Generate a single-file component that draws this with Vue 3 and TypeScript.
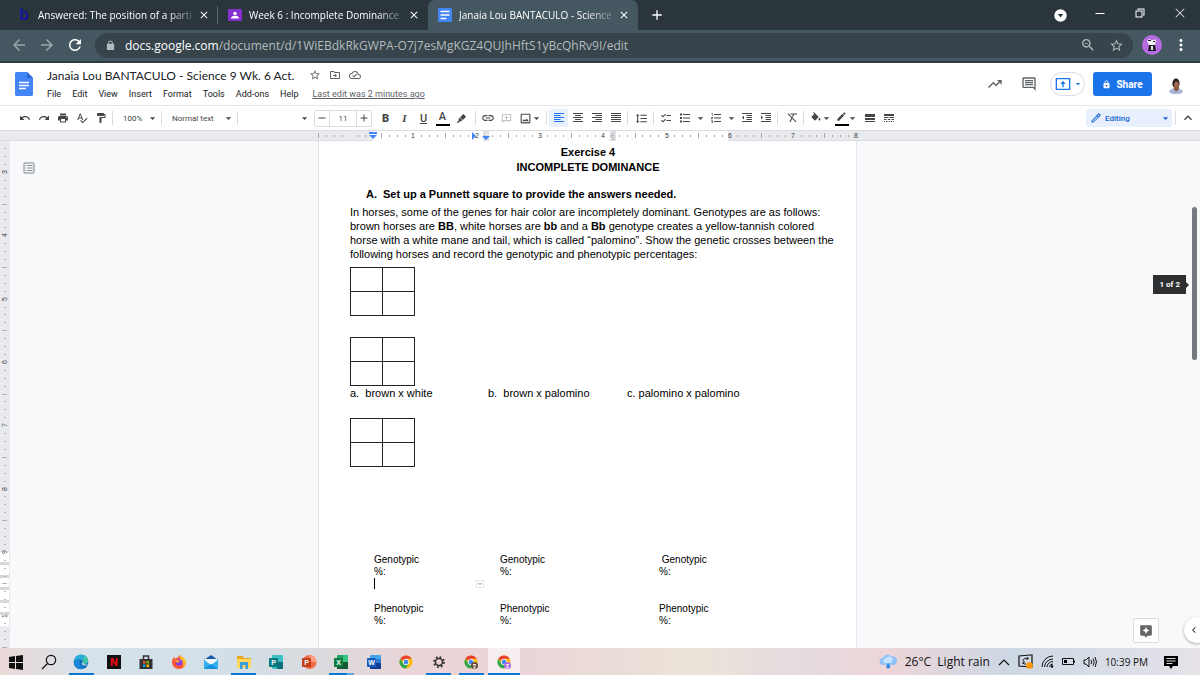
<script setup lang="ts">
import { h, ref } from 'vue'

const paths: Record<string, string> = {
  back: 'M20 11H7.83l5.59-5.59L12 4l-8 8 8 8 1.41-1.41L7.83 13H20v-2z',
  forward: 'M4 13h12.17l-5.59 5.59L12 20l8-8-8-8-1.41 1.41L16.17 11H4v2z',
  reload: 'M17.65 6.35C16.2 4.9 14.21 4 12 4c-4.42 0-7.99 3.58-7.99 8s3.57 8 7.99 8c3.73 0 6.84-2.55 7.73-6h-2.08c-.82 2.33-3.04 4-5.65 4-3.31 0-6-2.69-6-6s2.69-6 6-6c1.66 0 3.14.69 4.22 1.78L13 11h7V4l-2.35 2.35z',
  lock: 'M18 8h-1V6c0-2.76-2.24-5-5-5S7 3.24 7 6v2H6c-1.1 0-2 .9-2 2v10c0 1.1.9 2 2 2h12c1.1 0 2-.9 2-2V10c0-1.1-.9-2-2-2zM9 6c0-1.66 1.34-3 3-3s3 1.34 3 3v2H9V6z',
  shareLock: 'M18 8h-1V6c0-2.76-2.24-5-5-5S7 3.24 7 6v2H6c-1.1 0-2 .9-2 2v10c0 1.1.9 2 2 2h12c1.1 0 2-.9 2-2V10c0-1.1-.9-2-2-2zM9 6c0-1.66 1.34-3 3-3s3 1.34 3 3v2H9V6zM12 12.500a2.500 2.500 0 1 0 .01 0z',
  zoomOut: 'M15.5 14h-.79l-.28-.27C15.41 12.59 16 11.11 16 9.5 16 5.91 13.09 3 9.5 3S3 5.91 3 9.5 5.91 16 9.5 16c1.61 0 3.09-.59 4.23-1.57l.27.28v.79l5 4.99L20.49 19l-4.99-5zm-6 0C7.01 14 5 11.99 5 9.5S7.01 5 9.5 5 14 7.01 14 9.5 11.99 14 9.5 14zM7 9h5v1H7z',
  star: 'M22 9.24l-7.19-.62L12 2 9.19 8.63 2 9.24l5.46 4.73L5.82 21 12 17.27 18.18 21l-1.63-7.03L22 9.24zM12 15.4l-3.76 2.27 1-4.28-3.32-2.88 4.38-.38L12 6.1l1.71 4.04 4.38.38-3.32 2.88 1 4.28L12 15.4z',
  dots: 'M12 8c1.100 0 2-.9 2-2s-.9-2-2-2-2 .9-2 2 .9 2 2 2zm0 2c-1.100 0-2 .9-2 2s.9 2 2 2 2-.9 2-2-.9-2-2-2zm0 6c-1.100 0-2 .9-2 2s.9 2 2 2 2-.9 2-2-.9-2-2-2z',
  cross: 'M19 6.400L17.600 5 12 10.600 6.400 5 5 6.400 10.600 12 5 17.600 6.400 19 12 13.400 17.600 19 19 17.600 13.400 12z',
  thinCross: 'M21 4L20 3 12 11 4 3 3 4 11 12 3 20 4 21 12 13 20 21 21 20 13 12z',
  plus: 'M19 13h-6v6h-2v-6H5v-2h6V5h2v6h6z',
  minus: 'M5 11h14v2H5z',
  minimise: 'M3 12h18v2H3z',
  restore: 'M3 7h14v14H3zM5 9v10h10V9zM7 3h14v14h-3v-2h1V5H9v1H7z',
  folder: 'M20 6h-8l-2-2H4c-1.100 0-2 .9-2 2v12c0 1.100.9 2 2 2h16c1.100 0 2-.9 2-2V8c0-1.100-.9-2-2-2zm0 12H4V6h5.170l2 2H20v10zM12 17l4-4-4-4v3H8v2h4z',
  cloud: 'M19.35 10.04C18.67 6.59 15.64 4 12 4 9.11 4 6.6 5.64 5.35 8.04 2.34 8.36 0 10.91 0 14c0 3.31 2.69 6 6 6h13c2.76 0 5-2.24 5-5 0-2.64-2.05-4.78-4.65-4.96zM19 18H6c-2.21 0-4-1.79-4-4 0-2.05 1.53-3.76 3.56-3.97l1.07-.11.5-.95C8.08 7.14 9.94 6 12 6c2.62 0 4.88 1.86 5.39 4.43l.3 1.5 1.53.11c1.56.1 2.78 1.41 2.78 2.96 0 1.65-1.35 3-3 3zm-9-3.82l-2.09-2.09L6.5 13.5 10 17l6.01-6.01-1.41-1.41z',
  trend: 'M15 6l2.600 2.600-4.200 4.200-4-4L1.500 16.600 3 18.100l6.400-6.400 4 4 5.700-5.700L22 13V6z',
  comment: 'M21.99 4c0-1.1-.89-2-1.99-2H4c-1.1 0-2 .9-2 2v12c0 1.1.9 2 2 2h14l4 4-.01-18zM20 4v13.17L18.83 16H4V4h16zM6 12h12v2H6v-2zm0-3h12v2H6V9zm0-3h12v2H6V6z',
  present: 'M1 3h22v18H1zM3 5v14h18V5zM11 17v-5H8l4-5 4 5h-3v5z',
  undo: 'M12.5 8c-2.65 0-5.05.99-6.9 2.6L2 7v9h9l-3.62-3.62c1.39-1.16 3.16-1.88 5.12-1.88 3.54 0 6.55 2.31 7.6 5.5l2.37-.78C21.08 11.03 17.15 8 12.5 8z',
  redo: 'M18.4 10.6C16.55 8.99 14.15 8 11.5 8c-4.65 0-8.58 3.03-9.96 7.22L3.9 16c1.05-3.19 4.05-5.5 7.6-5.5 1.95 0 3.73.72 5.12 1.88L13 16h9V7l-3.6 3.6z',
  print: 'M19 8H5c-1.66 0-3 1.34-3 3v6h4v4h12v-4h4v-6c0-1.66-1.34-3-3-3zm-3 11H8v-5h8v5zm3-7c-.55 0-1-.45-1-1s.45-1 1-1 1 .45 1 1-.45 1-1 1zm-1-9H6v4h12V3z',
  spell: 'M12.45 16h2.09L9.43 3H7.57L2.46 16h2.09l1.12-3h5.64l1.14 3zm-6.02-5L8.5 5.48 10.57 11H6.43zm15.16.59l-8.09 8.09L9.83 16l-1.41 1.41 5.09 5.09L23 13l-1.41-1.41z',
  paint: 'M18 4V3c0-.55-.45-1-1-1H5c-.55 0-1 .45-1 1v4c0 .55.45 1 1 1h12c.55 0 1-.45 1-1V6h1v4H9v11c0 .55.45 1 1 1h2c.55 0 1-.45 1-1v-9h8V4h-3z',
  marker: 'M16 2l6 6-7 7-6-6zM8 10l6 6-3 2-2 0-5 4H1l5-6v-3z',
  link: 'M3.9 12c0-1.71 1.39-3.1 3.1-3.1h4V7H7c-2.76 0-5 2.24-5 5s2.24 5 5 5h4v-1.9H7c-1.71 0-3.1-1.39-3.1-3.1zM8 13h8v-2H8v2zm9-6h-4v1.9h4c1.71 0 3.1 1.39 3.1 3.1s-1.39 3.1-3.1 3.1h-4V17h4c2.76 0 5-2.24 5-5s-2.24-5-5-5z',
  addComment: 'M20 2H4c-1.100 0-2 .9-2 2v18l4-4h14c1.100 0 2-.9 2-2V4c0-1.100-.9-2-2-2zM4 4h16v12H4zM11 6h2v3h3v2h-3v3h-2v-3H8V9h3z',
  image: 'M19 5v14H5V5h14m0-2H5c-1.1 0-2 .9-2 2v14c0 1.1.9 2 2 2h14c1.1 0 2-.9 2-2V5c0-1.1-.9-2-2-2zm-4.860 8.860l-3 3.870L9 13.140 6 17h12l-3.860-5.140z',
  left: 'M2 2h20v2H2zM2 6h13v2H2zM2 10h20v2H2zM2 14h13v2H2zM2 18h20v2H2z',
  center: 'M2 2h20v2H2zM6 6h12v2H6zM2 10h20v2H2zM6 14h12v2H6zM2 18h20v2H2z',
  right: 'M2 2h20v2H2zM9 6h13v2H9zM2 10h20v2H2zM9 14h13v2H9zM2 18h20v2H2z',
  justify: 'M2 2h20v2H2zM2 6h20v2H2zM2 10h20v2H2zM2 14h20v2H2zM2 18h20v2H2z',
  spacing: 'M6 7h2.5L5 3.5 1.5 7H4v10H1.5L5 20.5 8.5 17H6V7zm4-2v2h12V5H10zm0 14h12v-2H10v2zm0-6h12v-2H10v2z',
  checklist: 'M13 6h9v2h-9zM13 16h9v2h-9zM2 7l1.400-1.400L6 8.200 10.600 3.600 12 5 6 11zM2 17l1.400-1.400L6 18.200l4.600-4.600L12 15l-6 6z',
  bullets: 'M2 3h4v4H2zM2 10h4v4H2zM2 17h4v4H2zM8 4h14v2H8zM8 11h14v2H8zM8 18h14v2H8z',
  numbers: 'M3 2h2v6H4V4H3zM2 10h4v1l-2 2.500h2v1H2v-1l2-2.500H2zM2 17h4v5H2v-1h3v-1H3v-1h2v-1H2zM8 4h14v2H8zM8 11h14v2H8zM8 18h14v2H8z',
  outdent: 'M11 16h11v-2H11v2zm-9-5l4 4V7l-4 4zm0 9h20v-2H2v2zM2 2v2h20V2H2zm9 6h11V6H11v2zm0 4h11v-2H11v2z',
  indent: 'M2 20h20v-2H2v2zM2 7v8l4-4-4-4zm9 9h11v-2H11v2zM2 2v2h20V2H2zm9 6h11V6H11v2zm0 4h11v-2H11v2z',
  clear: 'M3 4l1.500-1.500L21 19l-1.500 1.500-7-7L9 20H6.500l4.400-8.100zM8 3h14v2h-5.500l-3 5.500L12 9l2.200-4H10z',
  fill: 'M16.56 8.94L7.62 0 6.21 1.41l2.38 2.38-5.15 5.15c-.59.59-.59 1.54 0 2.12l5.5 5.5c.29.29.68.44 1.06.44s.77-.15 1.06-.44l5.5-5.5c.59-.58.59-1.53 0-2.12zM19 11.5s-2 2.17-2 3.5c0 1.1.9 2 2 2s2-.9 2-2c0-1.33-2-3.5-2-3.5z',
  edit: 'M3 17.25V21h3.75L17.81 9.94l-3.75-3.75L3 17.25zM20.71 7.04c.39-.39.39-1.02 0-1.41l-2.34-2.34c-.39-.39-1.02-.39-1.41 0l-1.83 1.83 3.75 3.75 1.83-1.83z',
  editOutline: 'M3 17.250V21h3.750L21 7.300c.5-.6.5-1.300 0-1.800L18.500 3c-.5-.5-1.300-.5-1.800 0zM5 18.100L14 9l1.500 1.500L6.400 19H5zM15.500 7.500L17.600 5.300l1.400 1.500-2.100 2.100z',
  weight: 'M2 4h20v6H2zM2 12h20v4H2zM2 18h20v2H2z',
  dash: 'M2 4h20v4H2zM2 10h9v2H2zM13 10h9v2h-9zM2 14h5v2H2zM9.500 14h5v2h-5zM17 14h5v2h-5zM2 18h2v2H2zM6 18h3v2H6zM11 18h2v2h-2zM15 18h3v2h-3zM20 18h2v2h-2z',
  up: 'M12 8l-6 6 1.410 1.410L12 10.830l4.590 4.580L18 14z',
  chevronLeft: 'M15.410 7.410L14 6l-6 6 6 6 1.410-1.410L10.830 12z',
  caret: 'M3 8h18l-9 9z',
  outline: 'M4 1h16c1.700 0 3 1.300 3 3v16c0 1.700-1.300 3-3 3H4c-1.700 0-3-1.300-3-3V4c0-1.700 1.300-3 3-3zM3 3v18h18V3zM5 6h2v2H5zM9 6h10v2H9zM5 11h2v2H5zM9 11h10v2H9zM5 16h2v2H5zM9 16h10v2H9z',
  explore: 'M4 2h16c1.100 0 2 .9 2 2v14c0 1.100-.9 2-2 2h-5l-3 3-3-3H4c-1.100 0-2-.9-2-2V4c0-1.100.9-2 2-2zM12 5l-1.900 4.100L6 11l4.100 1.900L12 17l1.900-4.100L18 11l-4.100-1.900z',
}

const Icon = (props: { name: string }) =>
  h('svg', { viewBox: '0 0 24 24', fill: 'currentColor', 'aria-hidden': 'true' }, [
    h('path', { d: paths[props.name], 'fill-rule': 'evenodd' }),
  ])
Icon.props = ['name']

const menus = ['File', 'Edit', 'View', 'Insert', 'Format', 'Tools', 'Add-ons', 'Help']
const fontSize = ref('11')
const url = { host: 'docs.google.com', rest: '/document/d/1WiEBdkRkGWPA-O7j7esMgKGZ4QUJhHftS1yBcQhRv9I/edit' }

const inch = 63.3
const hTicks = Array.from({ length: 69 }, (_, i) => i)
  .filter((i) => i % 8 !== 4 || i === 0)
  .map((i) => ({ x: Math.round((i * inch) / 8) + 0.5, tall: i % 8 === 0 }))
const hNumbers = [1, 2, 3, 4, 5, 6, 7, 8].map((n) => ({ n, x: Math.round(32 + n * inch) }))
const vNumbers = [3, 4, 5, 6, 7, 8, 9].map((n) => ({ n: String(n), y: Math.round(31 + (n - 3) * inch) }))
vNumbers.push({ n: '1', y: 475 })
const vTicks = Array.from({ length: 66 }, (_, i) => i - 3)
  .filter((i) => i % 8 !== 0)
  .map((i) => ({ y: Math.round(31 + (i * inch) / 8) + 0.5, tall: Math.abs(i % 8) === 4 }))
  .filter((t) => t.y > 4)
const vCells = [422, 435, 447, 460, 472]

const genotypes = ['Genotypic', 'Genotypic', 'Genotypic']
const phenotypes = ['Phenotypic', 'Phenotypic', 'Phenotypic']
</script>

<template>
  <div class="screen">
    <div class="tabs" role="tablist">
      <div class="tab first">
        <svg class="fav" viewBox="0 0 14 14"><text x="2" y="12" class="bfav">b</text></svg>
        <button class="tabname" role="tab">Answered: The position of a parti</button>
        <button class="x" aria-label="Close tab"><Icon name="cross" class="i12" /></button>
      </div>
      <div class="tab">
        <svg class="fav" viewBox="0 0 14 14"><rect y="1" width="14" height="12" rx="1" fill="#8430ce" /><circle cx="7" cy="5.500" r="1.800" fill="#fff" /><path d="M3 10.500c0-2 2-2.700 4-2.700s4 .7 4 2.700z" fill="#fff" /></svg>
        <button class="tabname" role="tab">Week 6 : Incomplete Dominance</button>
        <button class="x" aria-label="Close tab"><Icon name="cross" class="i12" /></button>
      </div>
      <div class="tab active">
        <svg class="fav" viewBox="0 0 14 14"><rect width="14" height="14" rx="1" fill="#4285f4" /><path d="M2.500 3.500h9M2.500 7h9M2.500 10.500h6" stroke="#fff" stroke-width="1.500" /></svg>
        <button class="tabname" role="tab">Janaia Lou BANTACULO - Science</button>
        <button class="x" aria-label="Close tab"><Icon name="cross" class="i12" /></button>
      </div>
      <button class="newtab" aria-label="New tab"><Icon name="plus" class="i16" /></button>
      <div class="winbtns">
        <button aria-label="Search tabs"><svg class="i13" viewBox="0 0 13 13"><circle cx="6.500" cy="6.500" r="6.200" fill="#fff" /><path d="M3.800 5h5.400L6.500 8.500z" fill="#29343a" /></svg></button>
        <button aria-label="Minimise"><Icon name="minimise" class="i12" /></button>
        <button aria-label="Restore"><Icon name="restore" class="i12" /></button>
        <button aria-label="Close"><Icon name="thinCross" class="i12" /></button>
      </div>
    </div>

    <div class="address">
      <button class="dim" aria-label="Back"><Icon name="back" class="i18" /></button>
      <button class="dim" aria-label="Forward"><Icon name="forward" class="i18" /></button>
      <button aria-label="Reload"><Icon name="reload" class="i18" /></button>
      <div class="omni">
        <Icon name="lock" class="i11" />
        <a class="url" href="#">{{ url.host }}<span>{{ url.rest }}</span></a>
        <button aria-label="Zoom"><Icon name="zoomOut" class="i16" /></button>
        <button aria-label="Bookmark"><Icon name="star" class="i15" /></button>
      </div>
      <button class="profile" aria-label="Profile">
        <svg class="i20" viewBox="0 0 20 20"><circle cx="10" cy="10" r="10" fill="#b86ae0" /><path d="M5 6l2-2 2 1h3l1-1 1 2-1 4H7z" fill="#f2f2f2" /><path d="M6 5h3v1H6zM11 6l2 0 0 1-2 0zM7 10h6l1 6H6z" fill="#1b1b22" /><path d="M9 11h2v4H9z" fill="#e8e8e8" /></svg>
      </button>
      <button class="more" aria-label="Menu"><Icon name="dots" class="i18" /></button>
    </div>

    <header class="dochead">
      <svg class="doclogo" viewBox="0 0 18 24"><path d="M1.500 0H12l6 6v16.500c0 .8-.7 1.500-1.500 1.500h-15C.7 24 0 23.300 0 22.500v-21C0 .7.7 0 1.500 0z" fill="#4285f4" /><path d="M12 0l6 6h-6z" fill="#2a66d8" /><path d="M4 10.500h10M4 13.500h10M4 16.500h7" stroke="#fff" stroke-width="1.500" /></svg>
      <div class="titles">
        <div class="titlerow">
          <h1>Janaia Lou BANTACULO - Science 9 Wk. 6 Act.</h1>
          <button aria-label="Star"><Icon name="star" class="i12" /></button>
          <button aria-label="Move"><Icon name="folder" class="i12" /></button>
          <button aria-label="Saved"><Icon name="cloud" class="i12" /></button>
        </div>
        <nav class="menus">
          <button v-for="m in menus" :key="m">{{ m }}</button>
          <a href="#">Last edit was 2 minutes ago</a>
        </nav>
      </div>
      <div class="actions">
        <button aria-label="Activity"><Icon name="trend" class="i16" /></button>
        <button aria-label="Comments"><Icon name="comment" class="i16" /></button>
        <button class="present" aria-label="Present"><Icon name="present" class="i16" /><Icon name="caret" class="i6" /></button>
        <button class="share"><Icon name="shareLock" class="i9" />Share</button>
        <svg class="avatar" viewBox="0 0 14 16"><path d="M0 14c1-3 3-3 5-4h4c2 1 4 1 5 4-2 2-4 2-7 2s-5 0-7-2z" fill="#a9b4d6" /><ellipse cx="7" cy="5.500" rx="3.600" ry="5" fill="#2c201d" /><ellipse cx="7.500" cy="7" rx="2.400" ry="3.600" fill="#a2694e" /><path d="M5 11l2 3 3-3 0-2H5z" fill="#8d573f" /></svg>
      </div>
    </header>

    <div class="toolbar">
      <div class="grp">
        <button v-for="n in ['undo', 'redo', 'print', 'spell', 'paint']" :key="n" class="t" :aria-label="n"><Icon :name="n" class="i12" /></button>
      </div>
      <i class="sep"></i>
      <label class="pick zoom"><select aria-label="Zoom level"><option>100%</option></select><Icon name="caret" class="i7" /></label>
      <i class="sep"></i>
      <label class="pick"><select aria-label="Paragraph style"><option>Normal text</option></select><Icon name="caret" class="i7" /></label>
      <i class="sep"></i>
      <label class="pick"><select aria-label="Font"><option></option></select><Icon name="caret" class="i7" /></label>
      <div class="size">
        <button aria-label="Smaller"><Icon name="minus" class="i12" /></button>
        <input v-model="fontSize" aria-label="Font size" />
        <button aria-label="Larger"><Icon name="plus" class="i12" /></button>
      </div>
      <div class="grp">
        <button class="t ch"><b>B</b></button>
        <button class="t ch"><em>I</em></button>
        <button class="t ch"><u>U</u></button>
        <button class="t ch"><span class="ink">A</span></button>
        <button class="t" aria-label="Highlight"><Icon name="marker" class="i11" /></button>
      </div>
      <i class="sep wide"></i>
      <div class="grp">
        <button class="t" aria-label="Link"><Icon name="link" class="i14" /></button>
        <button class="t faint" aria-label="Add comment"><Icon name="addComment" class="i11" /></button>
        <button class="t" aria-label="Image"><Icon name="image" class="i13" /></button>
        <Icon name="caret" class="i7 tight" />
      </div>
      <i class="sep wide"></i>
      <div class="grp">
        <button class="t on" aria-label="Left"><Icon name="left" class="i12" /></button>
        <button class="t" aria-label="Center"><Icon name="center" class="i12" /></button>
        <button class="t" aria-label="Right"><Icon name="right" class="i12" /></button>
        <button class="t" aria-label="Justify"><Icon name="justify" class="i12" /></button>
      </div>
      <i class="sep"></i>
      <div class="grp pad"><button class="t" aria-label="Line spacing"><Icon name="spacing" class="i13" /></button></div>
      <i class="sep"></i>
      <div class="grp lists">
        <button class="t" aria-label="Checklist"><Icon name="checklist" class="i12" /></button>
        <button class="t" aria-label="Bullets"><Icon name="bullets" class="i12" /></button>
        <Icon name="caret" class="i7" />
        <button class="t" aria-label="Numbers"><Icon name="numbers" class="i12" /></button>
        <Icon name="caret" class="i7" />
      </div>
      <div class="grp">
        <button class="t" aria-label="Outdent"><Icon name="outdent" class="i12" /></button>
        <button class="t" aria-label="Indent"><Icon name="indent" class="i12" /></button>
      </div>
      <i class="sep"></i>
      <div class="grp pad"><button class="t" aria-label="Clear formatting"><Icon name="clear" class="i12" /></button></div>
      <i class="sep"></i>
      <div class="grp">
        <button class="t" aria-label="Fill"><Icon name="fill" class="i12" /></button>
        <Icon name="caret" class="i7 tight" />
        <button class="t" aria-label="Border colour"><span class="ink"><Icon name="edit" class="i11" /></span></button>
        <Icon name="caret" class="i7 tight" />
      </div>
      <div class="grp pad">
        <button class="t" aria-label="Border weight"><Icon name="weight" class="i12" /></button>
        <button class="t" aria-label="Border dash"><Icon name="dash" class="i12" /></button>
      </div>
      <label class="pick mode"><Icon name="editOutline" class="i12" /><select aria-label="Mode"><option>Editing</option></select><Icon name="caret" class="i7" /></label>
      <i class="sep edge"></i>
      <button class="t" aria-label="Hide menus"><Icon name="up" class="i16" /></button>
    </div>

    <div class="cols hruler">
      <svg class="mid" viewBox="0 0 546 10" width="546" height="10">
        <rect x="55" width="355" height="10" fill="#fff" />
        <rect x="165" width="6" height="10" fill="#dfe1e4" /><rect x="292" width="6" height="10" fill="#dfe1e4" />
        <path d="M295 2v7" stroke="#80868b" stroke-dasharray="1 1" />
        <path v-for="t in hTicks" :key="t.x" :d="`M${t.x} ${t.tall ? 2 : 4}v${t.tall ? 5 : 2}`" stroke="#a5a9ae" />
        <text v-for="t in hNumbers" :key="t.n" :x="t.x" y="7" class="num">{{ t.n }}</text>
        <path d="M51 1h8v3l-4 4-4-4zM154 1l4 4-4 4zM164 5h8l-4 4z" fill="#4285f4" /><path d="M51 3.500h8" stroke="#fff" />
      </svg>
    </div>

    <main class="cols work">
      <svg class="vruler" viewBox="0 0 10 507" width="10" height="507">
        <rect y="411" width="9" height="74" fill="#fff" />
        <path v-for="y in vCells" :key="y" :d="`M0 ${y}.5h9`" stroke="#d5d7da" stroke-width="3" />
        <path v-for="t in vTicks" :key="t.y" :d="`M${t.tall ? 2 : 4} ${t.y}h${t.tall ? 5 : 2}`" stroke="#b0b4b8" />
        <text v-for="t in vNumbers" :key="t.n" :transform="`translate(7 ${t.y}) rotate(-90)`" class="num">{{ t.n }}</text>
      </svg>
      <div class="leftside"><button aria-label="Show outline"><Icon name="outline" class="i12" /></button></div>

      <article class="page">
        <h2>Exercise 4<br />INCOMPLETE DOMINANCE</h2>
        <h3><span>A.</span>Set up a Punnett square to provide the answers needed.</h3>
        <p class="intro">
          In horses, some of the genes for hair color are incompletely dominant. Genotypes are as follows:<br />
          brown horses are <b>BB</b>, white horses are <b>bb</b> and a <b>Bb</b> genotype creates a yellow-tannish colored<br />
          horse with a white mane and tail, which is called “palomino”. Show the genetic crosses between the<br />
          following horses and record the genotypic and phenotypic percentages:
        </p>
        <table class="punnett"><tbody><tr><td></td><td></td></tr><tr><td></td><td></td></tr></tbody></table>
        <table class="punnett second"><tbody><tr><td></td><td></td></tr><tr><td></td><td></td></tr></tbody></table>
        <div class="crosses"><span>a.&nbsp; brown x white</span><span>b.&nbsp; brown x palomino</span><span>c. palomino x palomino</span></div>
        <table class="punnett third"><tbody><tr><td></td><td></td></tr><tr><td></td><td></td></tr></tbody></table>
        <div class="results">
          <div v-for="(g, i) in genotypes" :key="i"><span v-if="i === 2">&nbsp;</span>{{ g }}<br />%:<div v-if="i === 0" class="caretrow"><i class="cursor"></i><button aria-label="Cell options"><Icon name="caret" class="i6" /></button></div></div>
        </div>
        <div class="results pheno">
          <div v-for="(p, i) in phenotypes" :key="i">{{ p }}<br />%:</div>
        </div>
      </article>

      <div class="rightside">
        <div class="pageno">1 of 2</div>
        <div class="thumb"></div>
        <button class="explore" aria-label="Explore"><Icon name="explore" class="i14" /></button>
        <button class="panel" aria-label="Show side panel"><Icon name="chevronLeft" class="i12" /></button>
      </div>
    </main>

    <footer class="taskbar">
      <div class="apps">
        <button aria-label="Start"><svg viewBox="0 0 16 16"><path d="M1 3l6-1v6H1zM8 2l7-1v7H8zM1 9h6v6l-6-1zM8 9h7v7l-7-1z" fill="#111" /></svg></button>
        <button aria-label="Search"><svg viewBox="0 0 16 16"><circle cx="10" cy="6" r="4.700" fill="none" stroke="#111" stroke-width="1.200" /><path d="M6.500 9.500L1 15" stroke="#111" stroke-width="1.200" /></svg></button>
        <button class="run" aria-label="Edge"><svg viewBox="0 0 16 16"><circle cx="8" cy="8" r="7.300" fill="#0f6cbd" /><path d="M1 7C2 2.500 5 .7 8.500.7c4 0 6.800 3 6.800 5.800 0 2.500-2 3.500-4 3.500-1.500 0-2-.7-1.300-1.500C10.500 6 7 3.500 1 7z" fill="#43c6a4" /><path d="M1 7C2 2.500 5 .7 8.500.7c1.500 0 3 .5 4 1.300-2 1-2.500 2.500-2.500 4.500C8 3.500 4 4.500 1 7z" fill="#2aa9dc" /><path d="M1 8c1-2.500 5-3.500 6-1-1 2 0 6 3.500 6.500-1.500 1.500-4 2-6 1C2 13 1 10.500 1 8z" fill="#1b86d8" /><path d="M9.500 8c-1.500 1.500 0 4 3.500 3.500l2-1c-1 0-5 1-5.500-2.500z" fill="#e3edf3" /></svg></button>
        <button aria-label="Netflix"><svg viewBox="0 0 16 16"><rect x="1" y="1" width="14" height="14" fill="#111" /><text x="8" y="12" class="nfx">N</text></svg></button>
        <button aria-label="Store"><svg viewBox="0 0 16 16"><path d="M1.500 5h13v10h-13z" fill="#333" /><path d="M5.500 5V2h5v3" fill="none" stroke="#333" stroke-width="1.500" /><path d="M5 7h2.500v2.500H5z" fill="#f25022" /><path d="M8.500 7H11v2.500H8.500z" fill="#7fba00" /><path d="M5 10.500h2.500V13H5z" fill="#00a4ef" /><path d="M8.500 10.500H11V13H8.500z" fill="#ffb900" /></svg></button>
        <button aria-label="Firefox"><svg viewBox="0 0 16 16"><path d="M1 8c0-2 1-4 2-5l1 1.500C6 4 8 3 9 1c1 2 5 3 6 7 0 4-3 7-7 7s-7-3-7-7z" fill="#ff5a36" /><path d="M9 1c1 2 6 3 6 7 0 3-2 5-3 5 1-3 0-6-3-8z" fill="#ffbd2e" /><circle cx="8" cy="8.500" r="3.300" fill="#8a3fe0" /><path d="M4 6c3-1 4 1 5 1-1 2-3 1-3 2 0-1-2-1-2-3z" fill="#ff9a2e" /></svg></button>
        <button aria-label="Mail"><svg viewBox="0 0 16 16"><path d="M1 6l7-5 7 5z" fill="#0f5ba6" /><path d="M1 6h14v9H1z" fill="#28a8ea" /><path d="M2 5h12v3l-6 3-6-3z" fill="#f0f6fb" /><path d="M1 6l7 5 7-5v9H1z" fill="#33b1f0" /><path d="M1 15l7-5 7 5z" fill="#1490df" /></svg></button>
        <button class="run" aria-label="Files"><svg viewBox="0 0 16 16"><path d="M1 2h6l1 2h7v10H1z" fill="#e8a820" /><path d="M1 5h14v9H1z" fill="#ffd65c" /><path d="M4 8h8v7h-2.500v-4h-3v4H4z" fill="#3f9be0" /></svg></button>
        <button aria-label="Publisher"><svg viewBox="0 0 16 16"><rect x="4" y="1" width="11" height="14" rx="1" fill="#3cc0c4" /><path d="M9 8h6v7H9z" fill="#0a6f78" /><rect x="1" y="4" width="9" height="9" rx="1" fill="#077a80" /><text x="5.500" y="11" class="app">P</text></svg></button>
        <button aria-label="PowerPoint"><svg viewBox="0 0 16 16"><circle cx="8.500" cy="8" r="7" fill="#ed6c47" /><path d="M8.500 1a7 7 0 0 1 7 7h-7z" fill="#ff9f80" /><rect x="1" y="4" width="9" height="9" rx="1" fill="#c43e1c" /><text x="5.500" y="11" class="app">P</text></svg></button>
        <button class="run half" aria-label="Excel"><svg viewBox="0 0 16 16"><rect x="4" y="1" width="11" height="14" rx="1" fill="#21a366" /><path d="M10 1h5v7h-5z" fill="#33c481" /><path d="M4 8h11v7H4z" fill="#185c37" /><rect x="1" y="4" width="9" height="9" rx="1" fill="#107c41" /><text x="5.500" y="11" class="app">X</text></svg></button>
        <button aria-label="Word"><svg viewBox="0 0 16 16"><rect x="4" y="1" width="11" height="14" rx="1" fill="#41a5ee" /><path d="M4 5h11v4H4z" fill="#2b7cd3" /><path d="M4 9h11v6H4z" fill="#103f91" /><rect x="1" y="4" width="9" height="9" rx="1" fill="#185abd" /><text x="5.500" y="11" class="app">W</text></svg></button>
        <button aria-label="Chrome"><svg viewBox="0 0 16 16"><circle cx="8" cy="8" r="6.500" fill="#fbbc05" /><path d="M8 8L2.400 4.700A6.500 6.500 0 0 1 13.600 4.700H8z" fill="#ea4335" /><path d="M2.400 4.700A6.500 6.500 0 0 0 8 14.500L10.500 9.500 5 9z" fill="#34a853" /><circle cx="8" cy="8" r="3" fill="#fff" /><circle cx="8" cy="8" r="2.300" fill="#4285f4" /></svg></button>
        <button class="run" aria-label="Settings"><svg viewBox="0 0 16 16"><circle cx="8" cy="8" r="3.500" fill="none" stroke="#333" stroke-width="1.500" /><circle cx="8" cy="8" r="4.900" fill="none" stroke="#333" stroke-width="2" stroke-dasharray="1.800 2.048" /></svg></button>
        <button v-for="(c, k) in ['#6b4a35', '#b86ae0']" :key="c" class="run" :class="{ cur: k === 1 }" aria-label="Chrome profile"><svg viewBox="0 0 16 16"><circle cx="8" cy="8" r="6.500" fill="#fbbc05" /><path d="M8 8L2.400 4.700A6.500 6.500 0 0 1 13.600 4.700H8z" fill="#ea4335" /><path d="M2.400 4.700A6.500 6.500 0 0 0 8 14.500L10.500 9.500 5 9z" fill="#34a853" /><circle cx="8" cy="8" r="3" fill="#fff" /><circle cx="8" cy="8" r="2.300" fill="#4285f4" /><circle cx="11.500" cy="11.500" r="3.500" :fill="c" /><path d="M10 10h3v1.500h-3zM10.500 12.500h2v2h-2z" fill="#eee" /></svg></button>
      </div>
      <div class="tray">
        <svg class="i18" viewBox="0 0 18 18"><path d="M4 12a3.500 3.500 0 0 1 0-7 4.500 4.500 0 0 1 8-1.500 4 4 0 0 1 3 8.500z" fill="#8fc3f7" /><path d="M5 10a3 3 0 0 1 2-5 4 4 0 0 1 7 2l-2 3z" fill="#c8e3fc" /><path d="M9 10c2 2.500 2.500 3.500 2 4.500s-3 1.500-3.500 0S7.500 12.500 9 10z" fill="#2d86e8" /></svg>
        <span class="weather">26°C&nbsp; Light rain</span>
        <svg class="i12" viewBox="0 0 12 12"><path d="M1 9l5-5 5 5" fill="none" stroke="#111" stroke-width="1.200" /></svg>
        <svg class="i15" viewBox="0 0 15 15"><path d="M1 2l11-1 2 0v12l-13-1z" fill="none" stroke="#111" stroke-width="1.200" /><path d="M5 7a3 3 0 0 1 5-2V3M10 5H8M5 10V8h2M5 9a3 3 0 0 0 3 1" fill="none" stroke="#111" /><circle cx="11.500" cy="11.500" r="3.300" fill="#ff9800" /></svg>
        <svg class="i13" viewBox="0 0 13 13"><path d="M1 12A11 11 0 0 1 12 1M3.500 12A8.500 8.500 0 0 1 12 4M6 12a6 6 0 0 1 6-5.500M8.500 12A3.500 3.500 0 0 1 12 9" fill="none" stroke="#111" /><circle cx="11" cy="11.500" r="1.200" /></svg>
        <svg class="i13" viewBox="0 0 13 13"><path d="M.5 3.500h11v6H.5zM12.500 5.500v2" fill="none" stroke="#111" /><path d="M2 5h3v3H2z" /></svg>
        <svg class="i14" viewBox="0 0 14 14"><path d="M1 5h2l3-3v10L3 9H1zM8 5q1.500 2 0 4M10 3.500q2.500 3.500 0 7M12 2q3 5 0 10" fill="none" stroke="#111" /></svg>
        <time>10:39 PM</time>
        <svg class="i14" viewBox="0 0 14 14"><path d="M0 1h14v10H9l-2 3-2-3H0z" /><path d="M2.500 3.500h9M2.500 6h9M2.500 8.500h6" stroke="#ddd" /></svg>
      </div>
    </footer>
  </div>
</template>

<style>
html, body { margin: 0; background: #f8f9fa; }
</style>

<style scoped>
.screen { min-height: 100vh; display: flex; flex-direction: column; overflow: hidden; font-family: Roboto, "Liberation Sans", sans-serif; color: #3c4043; }
.screen *, .screen *::before, .screen *::after { box-sizing: border-box; }
button { border: 0; padding: 0; margin: 0; background: none; color: inherit; font: inherit; display: flex; align-items: center; justify-content: center; }
svg { display: block; flex: none; }
.i6 { width: 6px; height: 6px; } .i7 { width: 7px; height: 7px; } .i9 { width: 9px; height: 9px; }
.i11 { width: 11px; height: 11px; } .i12 { width: 12px; height: 12px; }
.i13 { width: 13px; height: 13px; } .i14 { width: 14px; height: 14px; } .i15 { width: 15px; height: 15px; }
.i16 { width: 16px; height: 16px; } .i18 { width: 18px; height: 18px; } .i20 { width: 20px; height: 20px; }

.tabs { display: flex; height: 30px; padding-left: 8px; background: #2a363c; color: #fff; font: 10px "Open Sans", sans-serif; }
.tab { width: 210px; display: flex; align-items: center; padding: 0 8px 0 10px; gap: 7px; }
.tab.first { padding-left: 9px; background: linear-gradient(#5b666c, #5b666c) right center / 1px 18px no-repeat; }
.tab.active { background: #455760; border-radius: 7px 7px 0 0; }
.fav { width: 14px; height: 14px; overflow: visible; }
.bfav { font: bold 16px "Open Sans", sans-serif; fill: #15188f; }
.tabname { flex: 1; min-width: 0; justify-content: flex-start; white-space: nowrap; mask-image: linear-gradient(90deg, #000 84%, #0004); }
.x { width: 12px; }
.newtab { width: 38px; }
.winbtns { margin-left: auto; display: flex; }
.winbtns button { width: 40px; height: 26px; }
.winbtns button:first-child { height: 30px; }

.address { display: flex; align-items: center; height: 33px; padding: 0 8px 1px 5px; background: #455760; border-bottom: 2px solid #2d3b43; color: #fff; }
.address > button { width: 28px; }
.address .dim { color: #9ba6ab; }
.omni { flex: 1; display: flex; align-items: center; height: 25px; border-radius: 13px; margin: 0 9px 0 6px; padding: 0 3px 0 10px; background: #37444b; color: #b3bbbf; }
.omni button { width: 28px; }
.url { flex: 1; margin-left: 9px; color: #fff; text-decoration: none; font: 12px "Open Sans", sans-serif; }
.url span { color: #b3bbbf; }
.address > .profile { width: 20px; margin-right: 7px; }
.address > .more { width: 23px; }

.dochead { display: flex; align-items: center; height: 43px; padding: 0 17px 0 15px; background: #fff; border-bottom: 1px solid #e3e5e8; }
.doclogo { width: 18px; height: 24px; }
.titles { margin-left: 14px; }
.titlerow { display: flex; align-items: center; gap: 8px; height: 18px; color: #5f6368; }
.titlerow h1 { margin: 0 7px 0 0; font: 12px Lato, sans-serif; color: #202124; white-space: nowrap; }
.menus { display: flex; align-items: center; gap: 11px; height: 18px; padding-top: 2px; font-size: 9px; color: #202124; }
.menus a { margin-left: 3px; color: #5f6368; }
.actions { margin-left: auto; display: flex; align-items: center; gap: 8px; color: #5f6368; }
.actions > button:nth-child(-n+2) { width: 26px; }
.actions .present { width: 35px; height: 24px; border: 1px solid #dadce0; border-radius: 12px; color: #1a73e8; gap: 4px; }
.actions .share { width: 59px; height: 24px; border-radius: 3px; background: #1a73e8; color: #fff; font-size: 10px; font-weight: 700; gap: 5px; }
.avatar { width: 14px; height: 16px; margin: 4px 0 0 9px; }

.toolbar { display: flex; align-items: center; height: 25px; padding: 0 3px 0 15px; background: #fff; border-bottom: 1px solid #dadce0; color: #444746; }
.grp { display: flex; align-items: center; }
.grp.pad { padding-left: 2px; }
.t { width: 19px; height: 18px; flex: none; }
.t.on { background: #e8f0fe; color: #1a73e8; }
.t.faint { color: #b6b8bb; }
.tight { margin: 0 2px 0 -2px; }
.lists > svg { margin: 0 2px 0 3px; }
.sep { width: 1px; height: 14px; flex: none; margin: 0 2px; background: #dadce0; }
.sep.wide { margin-left: 4px; }
.ch { font-size: 11px; font-weight: 500; }
.ch b { font-weight: 900; }
.ch em { font-family: "Liberation Serif", serif; font-weight: 700; }
.ink { display: block; width: 14px; height: 16px; line-height: 14px; text-align: center; border-bottom: 2px solid #000; }
.ink svg { margin: 1px auto; }
.pick { display: grid; grid-template-columns: minmax(0, 1fr); align-items: center; width: 71px; }
.pick > * { grid-area: 1 / 1; }
.pick > svg { justify-self: end; margin-right: 3px; pointer-events: none; }
.pick select { appearance: none; border: 0; margin: 0; width: 100%; height: 18px; padding: 0 0 0 8px; background: none; color: #444746; font: 8px Roboto, sans-serif; }
.pick.zoom { width: 44px; }
.pick.mode { width: 86px; height: 18px; margin-left: auto; border-radius: 3px; background: #e8f0fe; color: #1967d2; }
.pick.mode > svg:first-child { justify-self: start; margin-left: 4px; }
.pick.mode select { padding-left: 19px; color: #1967d2; font-weight: 500; }
.sep.edge { margin: 0 2px 0 3px; }
.size { display: flex; height: 17px; width: 58px; margin: 0 4px 0 3px; border: 1px solid #dadce0; border-radius: 2px; }
.size button { width: 14px; }
.size input { flex: 1; min-width: 0; border: solid #dadce0; border-width: 0 1px; padding: 0; background: none; text-align: center; color: #444746; font: 8px Roboto, sans-serif; }

.cols { display: grid; grid-template-columns: 10px minmax(0, 308fr) 539px minmax(0, 343fr); }
.hruler { height: 10px; background: #e8eaed; border-bottom: 1px solid #dadce0; }
.mid { grid-column: 3; }
.num { font: 7px "Liberation Sans", sans-serif; fill: #3c4043; text-anchor: middle; }
.work { flex: 1; background: #f8f9fa; }
.vruler { background: #e8eaed; height: 100%; }
.leftside { padding: 21px 0 0 13px; color: #80868b; }
.page { padding: 4px 30px 0 31px; background: #fff; border: solid #e3e5e8; border-width: 0 1px; color: #000; font: 11px/14px "Liberation Sans", Arial, sans-serif; white-space: nowrap; }
.page h2 { margin: 0; font-size: 11px; line-height: 15px; text-align: center; }
.page h3 { margin: 12px 0 4px 16px; font-size: 11px; line-height: 14px; }
.page h3 span { display: inline-block; width: 17px; }
.intro { margin: 0; }
.punnett { width: 65px; margin-top: 6px; border-collapse: collapse; }
.punnett td { height: 24px; padding: 0; border: 1px solid #222; }
.second { margin-top: 21px; }
.crosses { display: grid; grid-template-columns: 138px 139px 1fr; }
.third { margin-top: 18px; }
.results { display: grid; grid-template-columns: 126px 159px 1fr; padding-left: 24px; margin-top: 87px; font-size: 10px; line-height: 12px; height: 37px; }
.results.pheno { margin-top: 12px; }
.caretrow { display: flex; justify-content: space-between; align-items: center; padding-right: 16px; height: 11px; }
.cursor { width: 1px; height: 11px; background: #000; }
.caretrow button { width: 8px; height: 8px; border: 1px solid #e3e5e8; color: #bbb; }

.rightside { position: relative; overflow: hidden; }
.pageno { position: absolute; right: 14px; top: 134px; padding: 0 6px; font-size: 8px; font-weight: 700; line-height: 19px; background: #2d2f31; color: #fff; }
.pageno::after { content: ""; position: absolute; left: 100%; top: 7px; border: 3px solid transparent; border-left-color: #2d2f31; border-right: 0; }
.thumb { position: absolute; right: 3px; top: 66px; width: 5px; height: 153px; border-radius: 3px; background: #747a80; }
.explore { position: absolute; right: 41px; bottom: 5px; width: 26px; height: 25px; border: 1px solid #dadce0; border-radius: 2px; background: #fff; color: #666; }
.panel { position: absolute; right: -10px; bottom: 5px; width: 26px; height: 26px; padding-right: 6px; border-radius: 13px; background: #fff; box-shadow: 0 1px 3px #0005; }

.taskbar { display: flex; align-items: center; height: 27px; background: linear-gradient(90deg, #ead9d8 0, #d5e2ea 8%, #d2dfe7 20%, #ddd9dc 28%, #ecd3d6 36%, #ead6d8 44%, #ebe3d8 58%, #e4dcdf 66%, #edd5d8 74%, #cdd8e4 84%, #d8dde6 92%, #e6e2e8 100%); color: #111; }
.apps { width: 520px; height: 100%; display: grid; grid-template-columns: repeat(16, 1fr); }
.apps svg { width: 16px; height: 16px; }
.run { background: linear-gradient(#0a78d4, #0a78d4) center bottom / 25px 2px no-repeat; }
.run.half { background: linear-gradient(90deg, #0a78d4 70%, #66a6dc 70%) center bottom / 25px 2px no-repeat; }
.run.cur { background: linear-gradient(#0a78d4, #0a78d4) center bottom / 100% 2px no-repeat, #f6edef; }
.app { font: bold 7px "Liberation Sans", sans-serif; fill: #fff; text-anchor: middle; }
.nfx { font: bold 11px "DejaVu Sans Condensed", "Liberation Sans", sans-serif; fill: #e50914; text-anchor: middle; }
.tray { margin-left: auto; display: flex; align-items: center; gap: 8px; padding-right: 22px; font: 11px "Open Sans", sans-serif; }
.weather { font-size: 12px; white-space: nowrap; }
.tray time { font-size: 10px; margin-right: 8px; white-space: nowrap; }
</style>
